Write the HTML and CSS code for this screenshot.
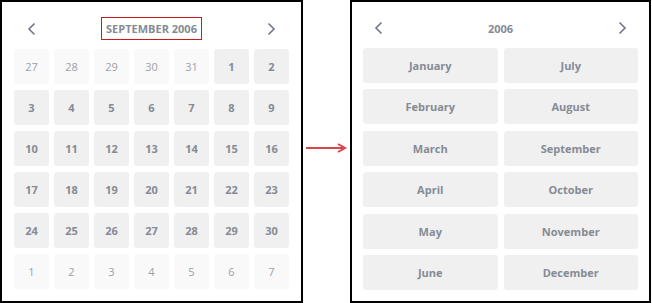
FILE: index.html
```html
<!DOCTYPE html>
<html lang="en">
<head>
    <meta charset="UTF-8">
    <title>Date Picker Views</title>
    <link rel="stylesheet" href="styles.css">
</head>
<body>
    <div class="stage">
        <section class="panel days-panel">
            <div class="picker-head">
                <button class="nav" type="button">
                    <svg width="9" height="14" viewBox="0 0 9 14"><polyline points="7.5,1.5 2,7 7.5,12.5"/></svg>
                </button>
                <span class="title boxed">SEPTEMBER 2006</span>
                <button class="nav" type="button">
                    <svg width="9" height="14" viewBox="0 0 9 14"><polyline points="1.5,1.5 7,7 1.5,12.5"/></svg>
                </button>
            </div>
            <div class="day-grid" id="dayGrid"></div>
        </section>

        <div class="link-arrow">
            <svg width="42" height="12" viewBox="0 0 42 12">
                <line x1="0" y1="6" x2="38" y2="6"/>
                <polyline points="32,2 39,6 32,10"/>
            </svg>
        </div>

        <section class="panel months-panel">
            <div class="picker-head">
                <button class="nav" type="button">
                    <svg width="9" height="14" viewBox="0 0 9 14"><polyline points="7.5,1.5 2,7 7.5,12.5"/></svg>
                </button>
                <span class="title">2006</span>
                <button class="nav" type="button">
                    <svg width="9" height="14" viewBox="0 0 9 14"><polyline points="1.5,1.5 7,7 1.5,12.5"/></svg>
                </button>
            </div>
            <div class="month-grid">
                <div class="cell">January</div>
                <div class="cell">July</div>
                <div class="cell">February</div>
                <div class="cell">August</div>
                <div class="cell">March</div>
                <div class="cell">September</div>
                <div class="cell">April</div>
                <div class="cell">October</div>
                <div class="cell">May</div>
                <div class="cell">November</div>
                <div class="cell">June</div>
                <div class="cell">December</div>
            </div>
        </section>
    </div>

    <script>
        // September 2006 starts on a Friday, weeks start on Sunday
        var grid = document.getElementById("dayGrid");
        var days = [];
        for (var i = 27; i <= 31; i++) days.push({ n: i, other: true });
        for (var d = 1; d <= 30; d++) days.push({ n: d, other: false });
        for (var k = 1; days.length < 42; k++) days.push({ n: k, other: true });

        days.forEach(function(day) {
            var cell = document.createElement("div");
            cell.className = day.other ? "cell other" : "cell";
            cell.textContent = day.n;
            grid.appendChild(cell);
        });
    </script>
</body>
</html>
```

FILE: styles.css
```css
body {
    margin: 0;
    background-color: #fff;
    font-family: "Open Sans", "Liberation Sans", sans-serif;
}

.stage {
    display: flex;
    width: 652px;
    height: 303px;
}

.panel {
    box-sizing: border-box;
    height: 303px;
    border: 2px solid #000;
    padding: 12px;
    display: flex;
    flex-direction: column;
    gap: 6px;
}

.days-panel {
    width: 303px;
}

.months-panel {
    width: 301px;
    padding: 12px 11px;
}

.picker-head {
    height: 29px;
    display: flex;
    align-items: center;
    justify-content: space-between;
}

.months-panel .picker-head {
    height: 28px;
}

.nav {
    width: 34px;
    height: 28px;
    padding: 0;
    border: none;
    background: none;
    display: flex;
    align-items: center;
    justify-content: center;
}

.months-panel .nav {
    width: 30px;
}

.nav svg polyline {
    fill: none;
    stroke: #6f7787;
    stroke-width: 1.6;
}

.title {
    font-size: 11px;
    font-weight: 700;
    color: #858b95;
    line-height: 21px;
}

.boxed {
    border: 1px solid #cc1a1a;
    padding: 0 4px;
}

.day-grid {
    display: grid;
    grid-template-columns: repeat(7, 35px);
    grid-template-rows: repeat(6, 35px);
    column-gap: 5px;
    row-gap: 6px;
}

.month-grid {
    display: grid;
    grid-template-columns: 1fr 1fr;
    grid-template-rows: repeat(6, 35px);
    column-gap: 6px;
    row-gap: 6.4px;
}

.cell {
    background-color: #f0f0f0;
    border-radius: 3px;
    display: flex;
    align-items: center;
    justify-content: center;
    font-size: 11px;
    font-weight: 700;
    color: #858b95;
}

.cell.other {
    background-color: #f9f9f9;
    font-weight: 400;
    color: #9ca1a9;
}

.link-arrow {
    width: 47px;
    display: flex;
    align-items: center;
    justify-content: center;
    padding-bottom: 7px;
}

.link-arrow line,
.link-arrow polyline {
    fill: none;
    stroke: #d9464a;
    stroke-width: 2;
}
```
